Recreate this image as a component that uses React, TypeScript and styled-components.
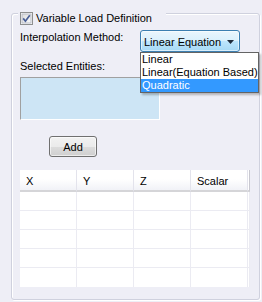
import React from 'react'
import styled, { createGlobalStyle } from 'styled-components'

const GlobalStyle = createGlobalStyle`
    html, body {
        margin: 0;
        padding: 0;
        background: #eeeef6;
    }
    body {
        font-family: "Liberation Sans", Arial, sans-serif;
        font-size: 11px;
        color: #000;
    }
`

const columns = ['X', 'Y', 'Z', 'Scalar']
const rows = [0, 1, 2, 3, 4]
const options = ['Linear', 'Linear(Equation Based)', 'Quadratic']

export default function App() {
    return (
        <>
            <GlobalStyle />
            <Page>
                <GroupBox>
                    <Header>
                        <CheckBox>
                            <svg width="13" height="13" viewBox="0 0 13 13">
                                <defs>
                                    <linearGradient id="cbfill" x1="0" y1="0" x2="1" y2="1">
                                        <stop offset="0" stopColor="#dcdcdc" />
                                        <stop offset="1" stopColor="#fbfbfb" />
                                    </linearGradient>
                                </defs>
                                <rect x="0.5" y="0.5" width="12" height="12" fill="#fff" stroke="#8e8f8f" />
                                <rect x="2" y="2" width="9" height="9" fill="url(#cbfill)" stroke="#b9bcc6" strokeWidth="1" />
                                <path d="M3.2 6.4 L5.4 9.2 L9.8 3.2" fill="none" stroke="#4a5f97" strokeWidth="1.7" />
                            </svg>
                        </CheckBox>
                        <span>Variable Load Definition</span>
                    </Header>

                    <MethodRow>
                        <FieldLabel $width={120} $offset={1}>Interpolation Method:</FieldLabel>
                        <Combo>
                            <ComboText>Linear Equation</ComboText>
                            <svg width="7" height="4" viewBox="0 0 7 4">
                                <path d="M0 0 H7 L3.5 4 Z" fill="#1e2a3a" />
                            </svg>
                        </Combo>
                        <Popup>
                            {options.map((o, i) => (
                                <PopupItem key={o} $selected={i === 2}>{o}</PopupItem>
                            ))}
                        </Popup>
                    </MethodRow>

                    <FieldLabel $offset={8}>Selected Entities:</FieldLabel>
                    <EntitiesBox />

                    <AddButton>Add</AddButton>

                    <Table>
                        {columns.map(c => (
                            <HeadCell key={c}>{c}</HeadCell>
                        ))}
                        <HeadFiller />
                        {rows.map(r => (
                            <React.Fragment key={r}>
                                {columns.map(c => (
                                    <Cell key={c} $last={r === rows.length - 1} />
                                ))}
                                <Filler $last={r === rows.length - 1} />
                            </React.Fragment>
                        ))}
                    </Table>
                </GroupBox>
            </Page>
        </>
    )
}

const Page = styled.div`
    width: 262px;
    height: 302px;
    box-sizing: border-box;
    padding: 13px 0 0 11px;
`

const GroupBox = styled.div`
    width: 249px;
    height: 287px;
    box-sizing: border-box;
    border: 1px solid #cfd1de;
    border-radius: 3px;
    box-shadow: 1px 1px 0 #ffffff, inset 1px 1px 0 #ffffff;
    display: flex;
    flex-direction: column;
    align-items: flex-start;
    padding: 0 8px;
`

const Header = styled.div`
    display: flex;
    align-items: center;
    gap: 3px;
    height: 13px;
    line-height: 13px;
    margin: -2px 0 0 -2px;
    padding: 0 14px 0 2px;
    background: #eeeef6;
    white-space: nowrap;
`

const CheckBox = styled.span`
    display: flex;
    width: 13px;
    height: 13px;
`

const MethodRow = styled.div`
    position: relative;
    display: flex;
    align-items: flex-start;
    margin-top: 5px;
    height: 22px;
`

const FieldLabel = styled.div<{ $width?: number; $offset?: number }>`
    width: ${p => (p.$width ? `${p.$width}px` : 'auto')};
    margin-top: ${p => p.$offset ?? 0}px;
    line-height: 13px;
    white-space: nowrap;
`

const Combo = styled.div`
    width: 100px;
    height: 22px;
    box-sizing: border-box;
    border: 1px solid #3c7fb1;
    border-radius: 3px;
    background: linear-gradient(#eaf6fd 0%, #d9f0fc 50%, #bee6fd 50%, #a7d9f5 100%);
    box-shadow: inset 0 0 0 1px rgba(255, 255, 255, 0.55);
    display: flex;
    align-items: center;
    justify-content: space-between;
    padding: 1px 5px 0 3px;
`

const ComboText = styled.span`
    line-height: 18px;
    white-space: nowrap;
`

const Popup = styled.div`
    position: absolute;
    left: 120px;
    top: 22px;
    width: 119px;
    box-sizing: border-box;
    border: 1px solid #646464;
    background: #fff;
    box-shadow: 2px 2px 2px rgba(0, 0, 0, 0.25);
    z-index: 2;
`

const PopupItem = styled.div<{ $selected?: boolean }>`
    height: 13px;
    line-height: 13px;
    padding-left: 1px;
    white-space: nowrap;
    background: ${p => (p.$selected ? '#3399ff' : 'transparent')};
    color: ${p => (p.$selected ? '#fff' : '#000')};
`

const EntitiesBox = styled.div`
    margin-top: 4px;
    width: 140px;
    height: 43px;
    box-sizing: border-box;
    background: #cde5f5;
    border-top: 1px solid #a0a0a0;
    border-left: 1px solid #a0a0a0;
    border-bottom: 1px solid #ffffff;
    border-right: 1px solid #ffffff;
`

const AddButton = styled.button`
    margin: 16px 0 0 29px;
    width: 48px;
    height: 21px;
    padding: 0;
    box-sizing: border-box;
    border: 1px solid #707070;
    border-radius: 3px;
    background: linear-gradient(#f2f2f2 0%, #ebebeb 50%, #dddddd 50%, #cfcfcf 100%);
    box-shadow: inset 0 0 0 1px rgba(255, 255, 255, 0.6);
    font-family: "Liberation Sans", Arial, sans-serif;
    font-size: 11px;
    color: #000;
`

const Table = styled.div`
    margin-top: 13px;
    display: grid;
    grid-template-columns: 57px 57px 57px 57px 2px;
    grid-auto-rows: 19px;
    grid-template-rows: 22px;
    background: #ffffff;
`

const HeadCell = styled.div`
    box-sizing: border-box;
    height: 22px;
    padding: 1px 0 0 6px;
    display: flex;
    align-items: center;
    background: linear-gradient(#ffffff 0%, #ffffff 45%, #f1f2f7 100%);
    border-right: 1px solid #e3e3ec;
    border-bottom: 2px solid #d5d5d8;
`

const HeadFiller = styled.div`
    box-sizing: border-box;
    height: 22px;
    background: #ffffff;
    border-right: 1px solid #c8c8d0;
    border-bottom: 2px solid #d5d5d8;
`

const Cell = styled.div<{ $last?: boolean }>`
    box-sizing: border-box;
    background: #ffffff;
    border-right: 1px solid #ebebf2;
    border-bottom: ${p => (p.$last ? 'none' : '1px solid #ebebf2')};
`

const Filler = styled.div<{ $last?: boolean }>`
    box-sizing: border-box;
    background: #ffffff;
    border-right: 1px solid #ebebf2;
    border-bottom: ${p => (p.$last ? 'none' : '1px solid #ebebf2')};
`
